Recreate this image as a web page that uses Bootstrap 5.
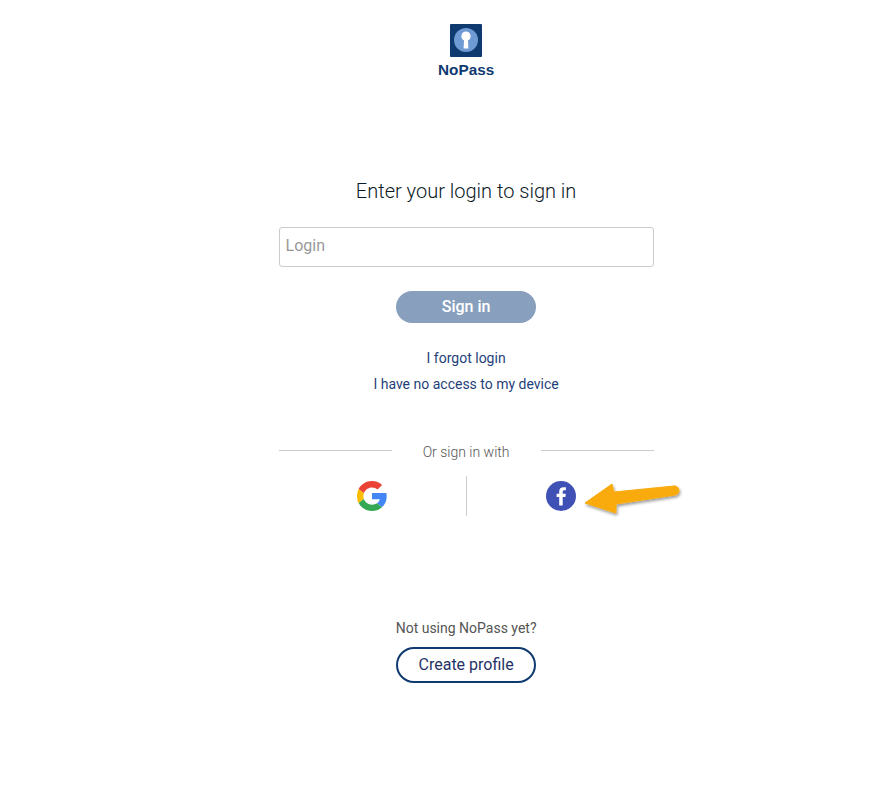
<!DOCTYPE html>
<html lang="en">
<head>
  <meta charset="utf-8">
  <meta name="viewport" content="width=device-width, initial-scale=1">
  <title>NoPass - Sign in</title>
  <link href="https://cdn.jsdelivr.net/npm/bootstrap@5.3.3/dist/css/bootstrap.min.css" rel="stylesheet">
  <style>
    body { font-family: Roboto, sans-serif; background: #fff; color: #1b2430; }
    .login-wrap { width: 375px; margin-left: 278.6px; padding-top: 24px; }
    .brand-logo { display: block; width: 32px; height: 33px; }
    .brand-name { font-family: "Liberation Sans", Arial, sans-serif; font-weight: 700; font-size: 15.3px; line-height: 18px; color: #0f3a70; margin-top: 4px; }
    .login-title { font-weight: 300; font-size: 20px; line-height: 24px; color: #0b1a26; margin: 100px 0 24px; }
    .login-input { height: 40px; padding: 0 6px 3px; font-size: 16px; border: 1px solid #ccc; border-radius: 3px; }
    .login-input::placeholder { color: #999; }
    .btn-signin { width: 140px; height: 32px; padding: 0; margin-top: 24px; border: 0; border-radius: 16px; background: #889fbd; color: #fff; font-size: 16px; font-weight: 500; }
    .help-links { margin-top: 25px; gap: 6px; font-size: 14px; line-height: 20px; }
    .help-links a { color: #1f3f7a; text-decoration: none; }
    .or-row { margin-top: 48px; height: 20px; font-size: 14px; line-height: 20px; color: #555; font-weight: 300; }
    .or-line { width: 113px; height: 1px; background: #ccc; margin-top: -4px; }
    .social-row { position: relative; height: 40px; margin-top: 14px; }
    .social-cell { width: 187px; }
    .social-cell-fb { padding-left: 1px; }
    .social-sep { width: 1px; background: #ccc; }
    .hint-arrow { position: absolute; left: 300px; top: 0; width: 110px; height: 44px; }
    .not-using { margin-top: 102px; font-size: 14px; line-height: 20px; color: #555; }
    .btn-create { width: 140px; height: 36px; padding: 0; margin-top: 9px; border: 2px solid #0f3a70; border-radius: 18px; background: #fff; color: #1f3366; font-size: 16px; }
  </style>
</head>
<body>

<div class="login-wrap text-center">
  <!-- Logo -->
  <div class="d-flex flex-column align-items-center">
    <svg class="brand-logo" viewBox="0 0 32 33" role="img" aria-label="NoPass logo">
      <rect width="32" height="33" rx="1" fill="#0f3a70"/>
      <circle cx="16" cy="16" r="12" fill="#6f9bd4"/>
      <path d="M16 7.500a4.700 4.700 0 0 1 2 8.900l.4 8.100h-4.800l.4-8.100a4.700 4.700 0 0 1 2-8.900z" fill="#fff"/>
    </svg>
    <div class="brand-name">NoPass</div>
  </div>

  <h1 class="login-title">Enter your login to sign in</h1>

  <form>
    <input type="text" class="form-control login-input" placeholder="Login">
    <button type="button" class="btn btn-signin">Sign in</button>
  </form>

  <div class="help-links d-flex flex-column align-items-center">
    <a href="#">I forgot login</a>
    <a href="#">I have no access to my device</a>
  </div>

  <!-- Social login -->
  <div class="or-row d-flex justify-content-between align-items-center">
    <span class="or-line"></span>
    <span>Or sign in with</span>
    <span class="or-line"></span>
  </div>
  <div class="social-row d-flex">
    <div class="social-cell d-flex justify-content-center align-items-center">
      <svg width="30" height="30" viewBox="0 0 48 48" role="img" aria-label="Google">
        <path fill="#4285F4" d="M47.500 24.500c0-1.600-.150-3.400-.500-5.500H24v10h12.500c-.600 2.800-2.300 5-4.500 6.500l8 6.500c4.800-4.300 7.500-10.400 7.500-17.500z"/>
        <path fill="#FBBC05" d="M11 28.800c-.500-1.500-.800-3.100-.800-4.800s.300-3.300.800-4.800l-8.400-6.500C.900 16.100 0 20 0 24s.900 7.900 2.600 11.300l8.400-6.500z"/>
        <path fill="#EA4335" d="M24 10.200c3.500 0 6.500 1.200 8.900 3.500l7.200-7.200C35.900 2.500 30.500 0 24 0 14.600 0 6.500 5.300 2.600 12.700l8.400 6.500c1.900-5.200 7-9 13-9z"/>
        <path fill="#34A853" d="M24 48c6.500 0 12-2.100 16-6l-8-6.500c-2.100 1.500-4.800 2.300-8 2.300-6 0-11.100-3.800-13-9l-8.400 6.500C6.500 42.700 14.600 48 24 48z"/>
      </svg>
    </div>
    <div class="social-sep"></div>
    <div class="social-cell social-cell-fb d-flex justify-content-center align-items-center">
      <svg width="30" height="30" viewBox="0 0 30 30" role="img" aria-label="Facebook">
        <circle cx="15" cy="15" r="15" fill="#3f51b5"/>
        <path d="M16.700 24.500V16h2.700l.4-3.300h-3.100v-1.900c0-1 .300-1.600 1.600-1.600h1.600V6.300c-.3 0-1.300-.1-2.400-.1-2.500 0-4.300 1.500-4.300 4.300v2.200h-2.600V16h2.600v8.500z" fill="#fff"/>
      </svg>
    </div>
    <svg class="hint-arrow" viewBox="0 0 110 44" aria-hidden="true">
      <defs>
        <filter id="arrowShadow" x="-10%" y="-20%" width="125%" height="150%">
          <feDropShadow dx="1" dy="2" stdDeviation="1.500" flood-color="#000" flood-opacity=".4"/>
        </filter>
      </defs>
      <path d="M6 27 L33 8 L35 16 L95 10 A4.500 4.500 0 0 1 96 19 L37 28 L37 37 Z" fill="#f9ab0e" stroke="#f9ab0e" stroke-linejoin="round" filter="url(#arrowShadow)"/>
    </svg>
  </div>

  <div class="not-using">Not using NoPass yet?</div>
  <button type="button" class="btn btn-create">Create profile</button>
</div>

<script src="https://cdn.jsdelivr.net/npm/bootstrap@5.3.3/dist/js/bootstrap.bundle.min.js"></script>
</body>
</html>
